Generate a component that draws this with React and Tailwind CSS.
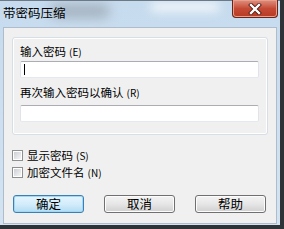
import React from 'react';

const font = { fontFamily: '"Noto Sans CJK SC", "Noto Sans", sans-serif' };

const Field = ({ caret }) => (
  <div className="relative w-[239px] h-[17px] bg-white border border-[#e2e3ea] border-t-[#abadb3] border-b-[#e3e9ef] rounded-[2px]">
    {caret && <div className="absolute left-[3px] top-[2px] w-px h-[11px] bg-black" />}
  </div>
);

const Check = ({ label, hot }) => (
  <div className="flex items-center h-[13px] gap-[4px]">
    <div className="w-[11px] h-[11px] border border-[#8e8f8f] bg-white p-px">
      <div className="w-full h-full bg-gradient-to-br from-[#cbcfd5] to-[#f6f6f6]" />
    </div>
    <span className="text-[11.5px] leading-[13px] text-black">
      {label}
      <span className="text-[10px] ml-[3px]">({hot})</span>
    </span>
  </div>
);

const Btn = ({ children, primary }) => (
  <div
    className={
      'w-[71px] h-[18px] rounded-[3px] border flex items-center justify-center text-[12.5px] leading-none text-black ' +
      (primary
        ? 'border-[#3c7fb1] bg-gradient-to-b from-[#e6f5fd] via-[#d3edfb] to-[#b4dcf3] shadow-[inset_0_0_0_1px_#9fd9f7]'
        : 'border-[#707070] bg-gradient-to-b from-[#f4f4f4] via-[#e6e6e6] to-[#d0d0d0] shadow-[inset_0_0_0_1px_#fcfcfc]')
    }
  >
    {children}
  </div>
);

export default function App() {
  return (
    <div
      className="relative w-[284px] h-[229px] overflow-hidden flex flex-col bg-gradient-to-b from-[#c6dbee] to-[#d3e3f2] border-r-[4px] border-b-[4px] border-[#2e3338]"
      style={font}
    >
      {/* glass streaks */}
      <div className="absolute left-[50px] top-[4px] w-[60px] h-[14px] rounded-full bg-[#8e979f] opacity-60 blur-[6px]" />
      <div className="absolute left-[150px] top-[2px] w-[70px] h-[10px] rounded-full bg-white opacity-70 blur-[5px]" />
      <div className="absolute left-0 top-0 w-full h-px bg-[#6d7a86]" />

      {/* title bar */}
      <div className="relative h-[27px] flex shrink-0">
        <div className="pl-[3px] pt-[6px] text-[12.5px] leading-[14px] text-black">带密码压缩</div>
        <div className="ml-auto mr-[2px] w-[46px] h-[18px] rounded-b-[4px] border border-t-0 border-[#6b2418] bg-gradient-to-b from-[#e0907f] via-[#c54a35] to-[#b83a22] flex items-center justify-center shadow-[inset_0_0_0_1px_#e7a090]">
          <svg width="14" height="12" viewBox="0 0 14 12">
            <path d="M3 2 L11 10 M11 2 L3 10" stroke="#4a1a12" strokeWidth="4" strokeLinecap="square" />
            <path d="M3 2 L11 10 M11 2 L3 10" stroke="#ffffff" strokeWidth="2.4" strokeLinecap="square" />
          </svg>
        </div>
      </div>

      {/* client area */}
      <div className="relative flex-1 ml-[3px] mr-[3px] mb-px bg-[#f0f0f0] border border-[#aebccb] flex flex-col">
        <div className="ml-[8px] mt-[9px] w-[256px] h-[98px] rounded-[3px] border border-[#d5dfe5] shadow-[inset_0_0_0_1px_#ffffff] pl-[7px] pt-[7px] flex flex-col">
          <div className="text-[11.5px] leading-[13px] text-black">
            输入密码<span className="text-[10px] ml-[3px]">(E)</span>
          </div>
          <div className="mt-[3px]">
            <Field caret />
          </div>
          <div className="mt-[8px] text-[11.5px] leading-[13px] text-black">
            再次输入密码以确认<span className="text-[10px] ml-[3px]">(R)</span>
          </div>
          <div className="mt-[6px]">
            <Field />
          </div>
        </div>

        <div className="ml-[8px] mt-[14px] flex flex-col gap-[4px]">
          <Check label="显示密码" hot="S" />
          <Check label="加密文件名" hot="N" />
        </div>

        <div className="ml-[9px] mt-[16px] flex gap-[20px]">
          <Btn primary>确定</Btn>
          <Btn>取消</Btn>
          <Btn>帮助</Btn>
        </div>
      </div>
    </div>
  );
}
